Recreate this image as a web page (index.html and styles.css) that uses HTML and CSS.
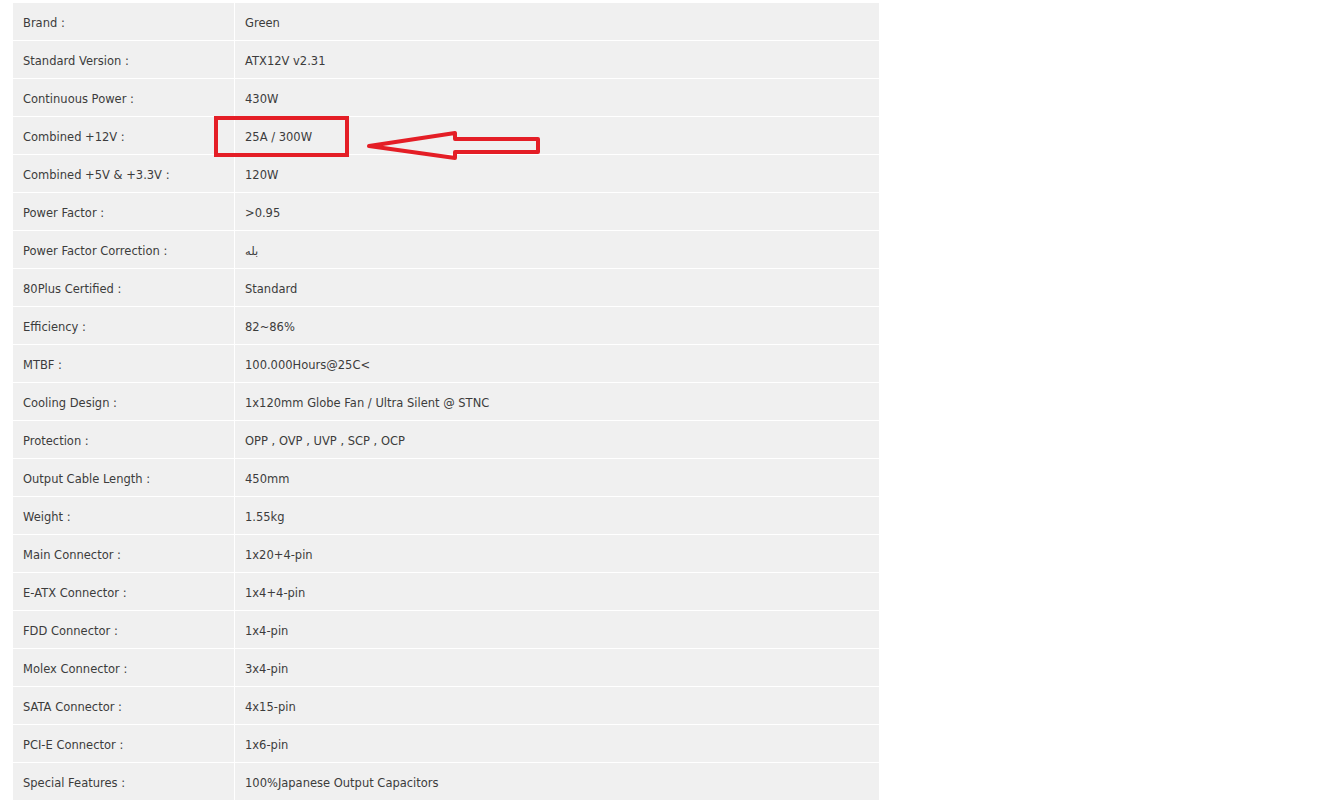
FILE: index.html
```html
<!DOCTYPE html>
<html lang="en">
<head>
    <meta charset="UTF-8">
    <title>Specifications</title>
    <link rel="stylesheet" href="styles.css">
</head>
<body>
    <div class="spec-wrap">
        <table class="spec-table">
            <tr><td class="label">Brand :</td><td class="value">Green</td></tr>
            <tr><td class="label">Standard Version :</td><td class="value">ATX12V v2.31</td></tr>
            <tr><td class="label">Continuous Power :</td><td class="value">430W</td></tr>
            <tr><td class="label">Combined +12V :</td><td class="value">25A / 300W</td></tr>
            <tr><td class="label">Combined +5V &amp; +3.3V :</td><td class="value">120W</td></tr>
            <tr><td class="label">Power Factor :</td><td class="value">&gt;0.95</td></tr>
            <tr><td class="label">Power Factor Correction :</td><td class="value" dir="rtl">بله</td></tr>
            <tr><td class="label">80Plus Certified :</td><td class="value">Standard</td></tr>
            <tr><td class="label">Efficiency :</td><td class="value">82~86%</td></tr>
            <tr><td class="label">MTBF :</td><td class="value">100.000Hours@25C&lt;</td></tr>
            <tr><td class="label">Cooling Design :</td><td class="value">1x120mm Globe Fan / Ultra Silent @ STNC</td></tr>
            <tr><td class="label">Protection :</td><td class="value">OPP , OVP , UVP , SCP , OCP</td></tr>
            <tr><td class="label">Output Cable Length :</td><td class="value">450mm</td></tr>
            <tr><td class="label">Weight :</td><td class="value">1.55kg</td></tr>
            <tr><td class="label">Main Connector :</td><td class="value">1x20+4-pin</td></tr>
            <tr><td class="label">E-ATX Connector :</td><td class="value">1x4+4-pin</td></tr>
            <tr><td class="label">FDD Connector :</td><td class="value">1x4-pin</td></tr>
            <tr><td class="label">Molex Connector :</td><td class="value">3x4-pin</td></tr>
            <tr><td class="label">SATA Connector :</td><td class="value">4x15-pin</td></tr>
            <tr><td class="label">PCI-E Connector :</td><td class="value">1x6-pin</td></tr>
            <tr><td class="label">Special Features :</td><td class="value">100%Japanese Output Capacitors</td></tr>
        </table>

        <!-- red markup drawn over the screenshot -->
        <svg class="markup" width="560" height="180" viewBox="0 0 560 180">
            <rect x="216" y="118" width="131" height="37" fill="none" stroke="#e41e26" stroke-width="4"/>
            <polygon points="369,146 455,133 455,139 538,139 538,152 455,152 455,158" fill="none" stroke="#e41e26" stroke-width="4" stroke-linejoin="round"/>
        </svg>
    </div>
</body>
</html>
```

FILE: styles.css
```css
body {
    margin: 0;
    padding: 0;
    background: #fff;
    font-family: 'DejaVu Sans', Verdana, sans-serif;
    font-size: 11.5px;
    color: #3c3c3c;
}

.spec-wrap {
    position: relative;
    padding: 2px 0 0 12px;
}

.spec-table {
    border-collapse: separate;
    border-spacing: 1px;
    width: 868px;
}

.spec-table td {
    background: #f0f0f0;
    height: 37px;
    padding: 2px 10px 0;
    box-sizing: border-box;
    vertical-align: middle;
    text-align: left;
}

.spec-table .label {
    width: 221px;
}

.markup {
    position: absolute;
    top: 0;
    left: 0;
    pointer-events: none;
}
```
